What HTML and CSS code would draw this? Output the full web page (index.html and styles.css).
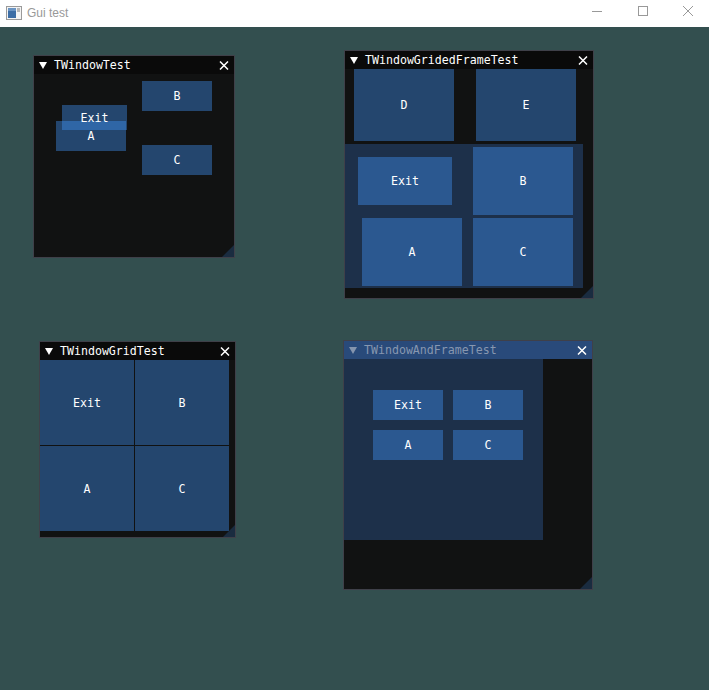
FILE: index.html
```html
<!DOCTYPE html>
<html>
<head>
<meta charset="utf-8">
<title>Gui test</title>
<link rel="stylesheet" href="styles.css">
</head>
<body>
<div class="os-bar">
  <svg class="app-icon" width="16" height="14" viewBox="0 0 16 14">
    <rect x="0.5" y="0.5" width="15" height="13" fill="#f4f4f4" stroke="#9a9a9a"/>
    <rect x="2" y="2" width="8" height="10" fill="#3d6ea6"/>
    <rect x="2" y="2" width="8" height="3" fill="#6b95c4"/>
    <rect x="11" y="2" width="3" height="4" fill="#b8b8b8"/>
  </svg>
  <span class="os-title">Gui test</span>
  <div class="os-controls">
    <div class="ctl ctl-min"><svg width="10" height="10" viewBox="0 0 10 10"><line x1="0" y1="5.5" x2="10" y2="5.5" stroke="#999" stroke-width="1"/></svg></div>
    <div class="ctl ctl-max"><svg width="10" height="10" viewBox="0 0 10 10"><rect x="0.5" y="0.5" width="9" height="9" fill="none" stroke="#999" stroke-width="1"/></svg></div>
    <div class="ctl ctl-close"><svg width="10" height="10" viewBox="0 0 10 10"><path d="M0 0L10 10M10 0L0 10" stroke="#999" stroke-width="1"/></svg></div>
  </div>
</div>

<div class="desktop">

  <div class="win win1">
    <div class="title">
      <svg class="tri" width="8" height="7" viewBox="0 0 8 7"><polygon points="0,0 8,0 4,7" fill="#fff"/></svg>
      <span class="ttext">TWindowTest</span>
      <svg class="close" width="10" height="9" viewBox="0 0 10 9"><path d="M1 0.5L9 8.5M9 0.5L1 8.5" stroke="#fff" stroke-width="1.5"/></svg>
    </div>
    <div class="free">
      <div class="btn fb-b">B</div>
      <div class="btn fb-c">C</div>
      <div class="btn fb-a">A</div>
      <div class="btn fb-exit">Exit</div>
    </div>
    <div class="grip"></div>
  </div>

  <div class="win win2">
    <div class="title">
      <svg class="tri" width="8" height="7" viewBox="0 0 8 7"><polygon points="0,0 8,0 4,7" fill="#fff"/></svg>
      <span class="ttext">TWindowGridedFrameTest</span>
      <svg class="close" width="10" height="9" viewBox="0 0 10 9"><path d="M1 0.5L9 8.5M9 0.5L1 8.5" stroke="#fff" stroke-width="1.5"/></svg>
    </div>
    <div class="toprow">
      <div class="btn big">D</div>
      <div class="btn big">E</div>
    </div>
    <div class="frame grided">
      <div class="btn g-exit">Exit</div>
      <div class="btn g-cell">B</div>
      <div class="btn g-cell">A</div>
      <div class="btn g-cell">C</div>
    </div>
    <div class="grip"></div>
  </div>

  <div class="win win3">
    <div class="title">
      <svg class="tri" width="8" height="7" viewBox="0 0 8 7"><polygon points="0,0 8,0 4,7" fill="#fff"/></svg>
      <span class="ttext">TWindowGridTest</span>
      <svg class="close" width="10" height="9" viewBox="0 0 10 9"><path d="M1 0.5L9 8.5M9 0.5L1 8.5" stroke="#fff" stroke-width="1.5"/></svg>
    </div>
    <div class="grid4">
      <div class="btn">Exit</div>
      <div class="btn">B</div>
      <div class="btn">A</div>
      <div class="btn">C</div>
    </div>
    <div class="grip"></div>
  </div>

  <div class="win win4">
    <div class="title active">
      <svg class="tri" width="8" height="7" viewBox="0 0 8 7"><polygon points="0,0 8,0 4,7" fill="#8595ae"/></svg>
      <span class="ttext dim">TWindowAndFrameTest</span>
      <svg class="close" width="10" height="9" viewBox="0 0 10 9"><path d="M1 0.5L9 8.5M9 0.5L1 8.5" stroke="#fff" stroke-width="1.5"/></svg>
    </div>
    <div class="frame small-grid">
      <div class="btn">Exit</div>
      <div class="btn">B</div>
      <div class="btn">A</div>
      <div class="btn">C</div>
    </div>
    <div class="grip"></div>
  </div>

</div>
</body>
</html>
```

FILE: styles.css
```css
html, body {
  margin: 0;
  padding: 0;
}
body {
  width: 709px;
  height: 690px;
  overflow: hidden;
  background: #334f4f;
  font-family: "DejaVu Sans Mono", "Liberation Mono", monospace;
  font-size: 11.6px;
  color: #fff;
}

/* OS title bar */
.os-bar {
  height: 27px;
  background: #ffffff;
  display: flex;
  align-items: center;
}
.app-icon {
  display: block;
  margin-left: 6px;
  margin-top: -2px;
}
.os-title {
  margin-left: 5px;
  font-family: "Liberation Sans", Arial, sans-serif;
  font-size: 12px;
  color: #999999;
  margin-top: -2px;
}
.os-controls {
  margin-left: auto;
  align-self: stretch;
  display: flex;
}
.ctl {
  display: flex;
  justify-content: center;
  padding-top: 6px;
  box-sizing: border-box;
}
.ctl svg { display: block; }
.ctl-min { width: 44px; }
.ctl-max { width: 48px; }
.ctl-close { width: 42px; }

/* desktop */
.desktop {
  position: relative;
  height: 663px;
}

.win {
  position: absolute;
  box-sizing: border-box;
  border: 1px solid rgba(110, 110, 128, 0.5);
  background: rgba(15, 15, 15, 0.94);
  display: flex;
  flex-direction: column;
}
.win1 { left: 33px; top: 28px; width: 202px; height: 203px; }
.win2 { left: 344px; top: 23px; width: 250px; height: 249px; }
.win3 { left: 39px; top: 314px; width: 197px; height: 197px; }
.win4 { left: 343px; top: 313px; width: 250px; height: 250px; }

.title {
  height: 18px;
  flex: none;
  background: #0a0a0a;
  display: flex;
  align-items: center;
  padding: 0 5px;
  line-height: 18px;
}
.title.active { background: #294a7a; }
.tri { display: block; flex: none; margin-right: 7px; }
.ttext { flex: 1; white-space: nowrap; }
.ttext.dim { color: #8797b0; }
.close { display: block; flex: none; }

.btn {
  background: rgba(66, 150, 250, 0.4);
  color: #fff;
  display: flex;
  align-items: center;
  justify-content: center;
  white-space: nowrap;
}

.grip {
  position: absolute;
  right: 0;
  bottom: 0;
  width: 12px;
  height: 12px;
  background: rgba(66, 150, 250, 0.2);
  clip-path: polygon(100% 0, 100% 100%, 0 100%);
}

/* window 1: free placed buttons */
.free {
  position: relative;
  flex: 1;
}
.free .btn { position: absolute; width: 70px; height: 30px; }
.fb-b { left: 108px; top: 7px; }
.fb-c { left: 108px; top: 71px; }
.fb-a { left: 22px; top: 47px; }
.free .fb-exit { left: 28px; top: 31px; width: 65px; height: 25px; }

/* window 2 */
.toprow {
  display: flex;
  gap: 22px;
  padding-left: 9px;
  height: 72px;
  flex: none;
}
.toprow .btn { width: 100px; }
.frame {
  background: rgba(41, 74, 122, 0.54);
}
.grided {
  margin-top: 3px;
  width: 238px;
  height: 144px;
  box-sizing: border-box;
  padding: 3px 10px 2px 17px;
  display: grid;
  grid-template-columns: 100px 100px;
  grid-template-rows: 68px 68px;
  column-gap: 11px;
  row-gap: 3px;
}
.g-exit {
  width: 94px;
  height: 48px;
  margin-left: -4px;
  margin-top: 10px;
  align-self: start;
  justify-self: start;
}

/* window 3 */
.grid4 {
  display: grid;
  grid-template-columns: 94px 94px;
  grid-template-rows: 85px 85px;
  gap: 1px;
}

/* window 4 */
.small-grid {
  width: 199px;
  height: 181px;
  box-sizing: border-box;
  padding: 31px 0 0 29px;
  display: grid;
  grid-template-columns: 70px 70px;
  grid-template-rows: 30px 30px;
  gap: 10px;
  align-content: start;
}
```
